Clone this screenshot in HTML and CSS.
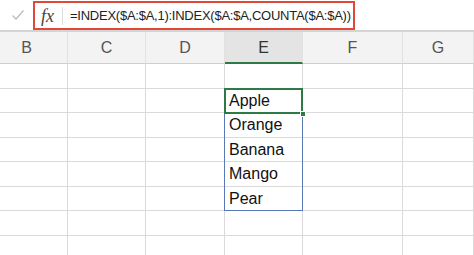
FILE: index.html
```html
<!DOCTYPE html>
<html lang="en">
<head>
    <meta charset="UTF-8">
    <title>Sheet</title>
    <link rel="stylesheet" href="styles.css">
</head>
<body>
    <!-- formula bar -->
    <div class="formula-bar">
        <div class="confirm">
            <svg width="14" height="12" viewBox="0 0 14 12"><path d="M1.5 6.5 L5 10 L12.5 1.5" fill="none" stroke="#bdbdbd" stroke-width="1.4"/></svg>
        </div>
        <div class="formula-box">
            <span class="fx">fx</span>
            <span class="formula">=INDEX($A:$A,1):INDEX($A:$A,COUNTA($A:$A))</span>
        </div>
    </div>

    <!-- sheet grid -->
    <div class="sheet">
        <div class="col-head">B</div>
        <div class="col-head">C</div>
        <div class="col-head">D</div>
        <div class="col-head active">E</div>
        <div class="col-head">F</div>
        <div class="col-head">G</div>

        <div class="cell"></div><div class="cell"></div><div class="cell"></div><div class="cell"></div><div class="cell"></div><div class="cell"></div>

        <div class="cell"></div><div class="cell"></div><div class="cell"></div>
        <div class="cell selected">Apple
            <div class="spill"></div>
            <div class="active-frame"><span class="handle"></span></div>
        </div>
        <div class="cell"></div><div class="cell"></div>

        <div class="cell"></div><div class="cell"></div><div class="cell"></div><div class="cell">Orange</div><div class="cell"></div><div class="cell"></div>
        <div class="cell"></div><div class="cell"></div><div class="cell"></div><div class="cell">Banana</div><div class="cell"></div><div class="cell"></div>
        <div class="cell"></div><div class="cell"></div><div class="cell"></div><div class="cell">Mango</div><div class="cell"></div><div class="cell"></div>
        <div class="cell"></div><div class="cell"></div><div class="cell"></div><div class="cell">Pear</div><div class="cell"></div><div class="cell"></div>
        <div class="cell"></div><div class="cell"></div><div class="cell"></div><div class="cell"></div><div class="cell"></div><div class="cell"></div>
        <div class="cell"></div><div class="cell"></div><div class="cell"></div><div class="cell"></div><div class="cell"></div><div class="cell"></div>
    </div>
</body>
</html>
```

FILE: styles.css
```css
* {
    margin: 0;
    padding: 0;
    box-sizing: border-box;
}

body {
    font-family: "Liberation Sans", Arial, sans-serif;
    background: #fff;
    width: 474px;
    height: 255px;
    overflow: hidden;
}

/* formula bar */
.formula-bar {
    height: 32px;
    display: flex;
    align-items: flex-start;
    padding-top: 1px;
    border-bottom: 2px solid #d4d4d4;
}

.confirm {
    width: 33px;
    height: 28px;
    display: flex;
    align-items: center;
    justify-content: center;
    padding-left: 2px;
}

.formula-box {
    width: 322px;
    height: 29px;
    border: 2px solid #e0483a;
    display: flex;
    align-items: center;
}

.fx {
    font-family: "Liberation Serif", serif;
    font-style: italic;
    font-size: 18px;
    color: #444;
    width: 28px;
    text-align: center;
    padding-right: 2px;
    border-right: 1px solid #dcdcdc;
    line-height: 18px;
}

.formula {
    font-size: 13px;
    letter-spacing: -0.25px;
    color: #222;
    padding-left: 7px;
}

/* grid */
.sheet {
    display: grid;
    grid-template-columns: 68px 78px 79px 78px 100px 1fr;
    grid-template-rows: 32px repeat(8, 24.5px);
}

.col-head {
    background: #f3f3f3;
    border-right: 1px solid #e2e2e2;
    border-bottom: 1px solid #cfcfcf;
    color: #555;
    font-size: 16px;
    display: flex;
    align-items: center;
    justify-content: center;
    padding-top: 1px;
}

.col-head:first-child {
    padding-right: 14px;
}

.col-head.active {
    background: #e4e4e4;
    border-bottom: 2px solid #2d7a46;
    color: #333;
}

.cell {
    border-right: 1px solid #dadada;
    border-bottom: 1px solid #dadada;
    font-size: 16px;
    color: #111;
    padding-left: 4px;
    padding-top: 1px;
    display: flex;
    align-items: center;
}

.cell.selected {
    position: relative;
}

.spill {
    position: absolute;
    left: -1px;
    top: -1px;
    width: 79px;
    height: 123px;
    border: 1px solid #5878b8;
    pointer-events: none;
}

.active-frame {
    position: absolute;
    left: -1px;
    top: -1px;
    width: 79px;
    height: 26px;
    border: 2px solid #2d7a46;
}

.handle {
    position: absolute;
    right: -5px;
    bottom: -5px;
    width: 6px;
    height: 6px;
    background: #2d7a46;
    border: 1px solid #fff;
}
```
